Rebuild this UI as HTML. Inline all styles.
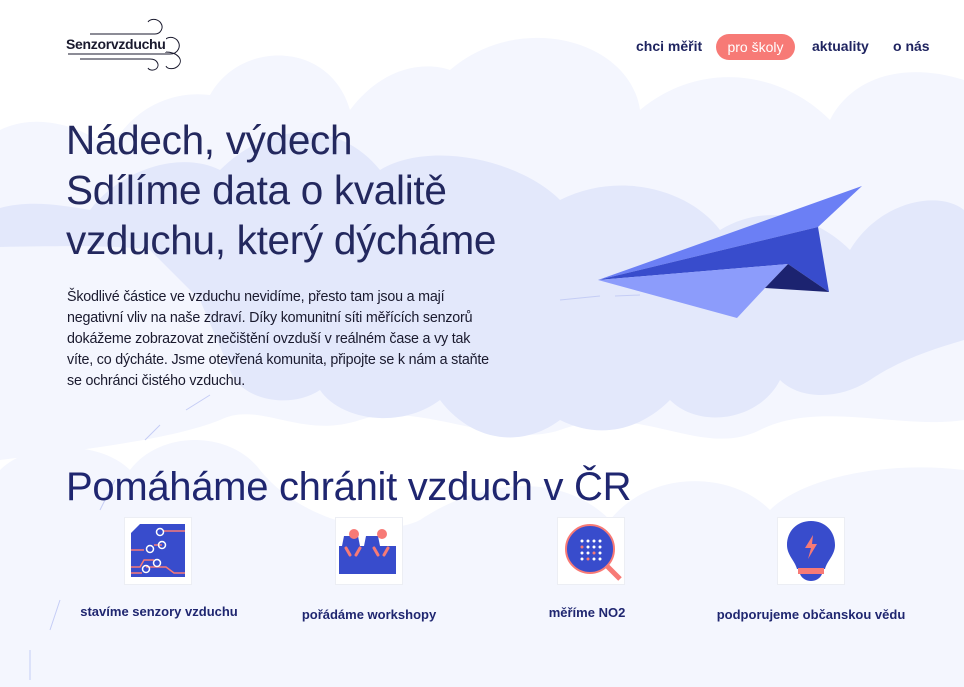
<!DOCTYPE html>
<html><head><meta charset="utf-8"><style>
*{margin:0;padding:0;box-sizing:border-box}
body{width:964px;height:687px;overflow:hidden;background:#fff;font-family:"Liberation Sans",sans-serif;position:relative}
svg.bg{position:absolute;left:0;top:0}
.abs{position:absolute}
h1{position:absolute;left:66px;top:115px;font-weight:400;font-size:40.5px;line-height:50px;color:#23285e;letter-spacing:-0.3px}
p.lead{position:absolute;left:67px;top:287px;font-size:14.3px;line-height:21px;color:#1a1a2e;letter-spacing:-0.2px;white-space:nowrap}
h2{position:absolute;left:66px;top:462px;font-weight:400;font-size:40px;line-height:50px;color:#1f2670;letter-spacing:-0.3px}
.nav a{position:absolute;top:38px;font-size:14px;font-weight:700;color:#1f2460;text-decoration:none}
.pill{position:absolute;left:716px;top:34px;width:79px;height:26px;border-radius:13px;background:#f77a76;color:#fff;font-size:14px;text-align:center;line-height:26px}
.box{position:absolute;width:68px;height:68px;border:1px solid #eceef4;background:#fff}
.lbl{position:absolute;font-size:13px;font-weight:700;color:#1f2670;white-space:nowrap;transform:translateX(-50%)}
</style></head><body>
<svg class="bg" width="964" height="687" viewBox="0 0 964 687">
<g fill="#f4f6fe">
<path d="M0 130 C40 110 90 130 110 150 C130 110 170 90 210 95 C240 40 330 40 350 110 C380 70 420 60 450 70 C520 10 630 40 640 110 C700 60 780 70 830 120 C850 80 900 60 964 80 V420 C900 430 820 400 760 430 C700 460 640 400 560 430 C500 450 420 400 360 420 C300 440 260 400 220 420 C170 440 80 450 0 460 Z"/>
<path d="M0 470 C30 440 100 440 130 470 C160 430 230 430 260 470 C300 520 380 540 420 520 C480 480 560 470 610 520 C650 470 730 470 770 510 C800 480 880 460 964 470 V687 H0 Z"/>
</g>
<g fill="#e3e8fb">
<path d="M0 208 C30 200 60 205 90 210 C120 170 180 150 220 170 C270 120 340 120 380 170 C430 140 520 160 560 200 C620 170 690 190 720 230 C770 200 820 220 850 250 C880 200 940 190 964 210 V340 C930 350 900 360 870 380 C840 400 800 400 780 380 C760 420 700 430 670 400 C640 430 600 440 560 420 C520 450 470 440 440 400 C400 430 340 420 320 390 C290 410 240 400 230 370 L200 300 L150 250 C120 245 60 246 0 247 Z"/>
</g>
<g stroke="#c5cdf5" stroke-width="1" fill="none">
<path d="M560 300 L600 296 M615 296 L640 295"/>
<path d="M210 395 L186 410 M160 425 L145 440 M115 480 L100 510 M60 600 L50 630 M30 650 L30 680"/>
</g>
<polygon points="598,280 862,186 818,227" fill="#6b7ff5"/>
<polygon points="598,280 818,227 829,292 788,264" fill="#384ccc"/>
<polygon points="598,280 788,264 765,288 737,318" fill="#8c9cfb"/>
<polygon points="788,264 829,292 765,288" fill="#1c2370"/>
</svg>

<svg class="abs" style="left:60px;top:14px" width="140" height="60" viewBox="0 0 140 60" fill="none" stroke="#1a1a2e" stroke-width="1">
<path d="M30 20 H95 C100 20 105 14 100 8 C96 4 90 5 88 8"/>
<path d="M8 40 H110 C118 40 122 32 117 26 C113 22 107 23 105 26"/>
<path d="M105 38 C118 38 124 46 118 52 C114 56 107 55 106 52"/>
<path d="M20 45 H90 C98 45 100 52 96 55 C93 57 89 56 88 54"/>
</svg>
<div class="abs" style="left:66px;top:36px;font-size:14px;font-weight:700;color:#1a1a2e;letter-spacing:-0.3px;background:#fff;line-height:16px">Senzorvzduchu</div>

<div class="nav">
<a style="left:636px">chci měřit</a>
<div class="pill">pro školy</div>
<a style="left:812px">aktuality</a>
<a style="left:893px">o nás</a>
</div>

<h1>Nádech, výdech<br>Sdílíme data o kvalitě<br>vzduchu, který dýcháme</h1>
<p class="lead">Škodlivé částice ve vzduchu nevidíme, přesto tam jsou a mají<br>negativní vliv na naše zdraví. Díky komunitní síti měřících senzorů<br>dokážeme zobrazovat znečištění ovzduší v reálném čase a vy tak<br>víte, co dýcháte. Jsme otevřená komunita, připojte se k nám a staňte<br>se ochránci čistého vzduchu.</p>

<h2>Pomáháme chránit vzduch v ČR</h2>

<div class="box" style="left:124px;top:517px"></div>
<svg class="abs" style="left:130px;top:523px" width="56" height="56" viewBox="0 0 56 56">
<path d="M10 1 H55 V54 H1 V10 Z" fill="#384ccc"/>
<g stroke="#f77a76" stroke-width="1.5" fill="none">
<path d="M34 8 H55 M1 27 H14 M1 50 H12 M24 22 H32 M16 44 H36 L44 50 H55"/>
<path d="M1 44 H10 L14 37 H24"/>
</g>
<g fill="none" stroke="#fff" stroke-width="1.5"><circle cx="30" cy="9" r="3.5"/><circle cx="20" cy="26" r="3.5"/><circle cx="32" cy="22" r="3.5"/><circle cx="27" cy="40" r="3.5"/><circle cx="16" cy="46" r="3.5"/></g>
</svg>
<div class="lbl" style="left:159px;top:604px">stavíme senzory vzduchu</div>

<div class="box" style="left:335px;top:517px"></div>
<svg class="abs" style="left:338px;top:522px" width="60" height="56" viewBox="0 0 60 56">
<path d="M6 14 H20 L22 24 H26 L28 14 H40 L42 24 H58 V52 H1 V24 H4 Z" fill="#384ccc"/>
<circle cx="16" cy="12" r="5" fill="#f77a76"/><circle cx="44" cy="12" r="5" fill="#f77a76"/>
<g stroke="#f77a76" stroke-width="3" stroke-linecap="round"><path d="M8 26 L12 33 M22 26 L18 33 M36 26 L40 33 M50 26 L46 33"/></g>
</svg>
<div class="lbl" style="left:369px;top:607px">pořádáme workshopy</div>

<div class="box" style="left:557px;top:517px"></div>
<svg class="abs" style="left:561px;top:520px" width="64" height="64" viewBox="0 0 64 64">
<line x1="46" y1="46" x2="59" y2="59" stroke="#f77a76" stroke-width="5"/>
<circle cx="29" cy="29" r="24" fill="#384ccc" stroke="#f77a76" stroke-width="2"/>
<g fill="#fff"><circle cx="21" cy="21" r="1.5"/><circle cx="27" cy="21" r="1.5"/><circle cx="33" cy="21" r="1.5"/><circle cx="39" cy="21" r="1.5"/><circle cx="27" cy="27" r="1.5"/><circle cx="33" cy="27" r="1.5"/><circle cx="39" cy="27" r="1.5"/><circle cx="21" cy="33" r="1.5"/><circle cx="27" cy="33" r="1.5"/><circle cx="39" cy="33" r="1.5"/><circle cx="21" cy="39" r="1.5"/><circle cx="33" cy="39" r="1.5"/><circle cx="39" cy="39" r="1.5"/></g>
<g fill="#f77a76"><circle cx="21" cy="27" r="1.5"/><circle cx="33" cy="33" r="1.5"/><circle cx="27" cy="39" r="1.5"/></g>
</svg>
<div class="lbl" style="left:587px;top:605px">měříme NO2</div>

<div class="box" style="left:777px;top:517px"></div>
<svg class="abs" style="left:785px;top:519px" width="52" height="64" viewBox="0 0 52 64">
<path d="M26 2 C12 2 2 12 2 26 C2 36 10 42 12 50 H40 C42 42 50 36 50 26 C50 12 40 2 26 2 Z" fill="#384ccc"/>
<rect x="13" y="49" width="26" height="6" fill="#f77a76"/>
<path d="M15 55 H37 C35 60 30 62 26 62 C22 62 17 60 15 55 Z" fill="#384ccc"/>
<path d="M28 16 L20 29 H26 L23 40 L32 25 H27 Z" fill="#f77a76"/>
</svg>
<div class="lbl" style="left:811px;top:607px">podporujeme občanskou vědu</div>
</body></html>
